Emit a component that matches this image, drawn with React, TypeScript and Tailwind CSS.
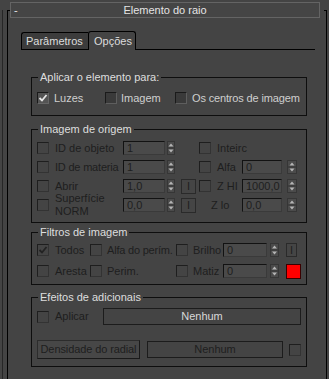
import React from "react";

const Check = ({ checked, dim }: { checked?: boolean; dim?: boolean }) => (
  <span
    className={
      dim
        ? "w-[12px] h-[12px] shrink-0 border border-t-[#1e1e1e] border-l-[#1e1e1e] border-b-[#333333] border-r-[#333333] bg-[#444444] flex items-center justify-center"
        : checked
        ? "w-[12px] h-[12px] shrink-0 border border-t-[#1a1a1a] border-l-[#1a1a1a] border-b-[#666666] border-r-[#666666] bg-[#545454] flex items-center justify-center"
        : "w-[12px] h-[12px] shrink-0 border border-t-[#1a1a1a] border-l-[#1a1a1a] border-b-[#5e5e5e] border-r-[#5e5e5e] bg-[#3a3a3a] flex items-center justify-center"
    }
  >
    {checked && (
      <svg width="10" height="10" viewBox="0 0 10 10">
        <polyline
          points="1.5,5 4,7.5 8.5,2"
          fill="none"
          stroke={dim ? "#222222" : "#e6e6e6"}
          strokeWidth="1.8"
        />
      </svg>
    )}
  </span>
);

const Spin = ({ w = 8, h = 14 }: { w?: number; h?: number }) => {
  const c = w / 2;
  return (
    <svg width={w} height={h} viewBox={`0 0 ${w} ${h}`} className="shrink-0 block">
      <rect x="0.5" y="0.5" width={w - 1} height={h - 1} fill="#4b4b4b" stroke="#363636" />
      <line x1="1" x2={w - 1} y1={h / 2} y2={h / 2} stroke="#333333" />
      <polygon points={`${c},2.5 ${c + 2.5},5.5 ${c - 2.5},5.5`} fill="#b5b5b5" />
      <polygon points={`${c},${h - 2.5} ${c + 2.5},${h - 5.5} ${c - 2.5},${h - 5.5}`} fill="#b5b5b5" />
    </svg>
  );
};

const Field = ({ v, cls }: { v: string; cls: string }) => (
  <span
    className={`${cls} h-[14px] shrink-0 border border-t-[#121212] border-l-[#121212] border-b-[#3a3a3a] border-r-[#3a3a3a] bg-[#4a4a4a] text-[#1e1e1e] pl-[3px] leading-[12px] overflow-hidden whitespace-nowrap`}
  >
    {v}
  </span>
);

const IBtn = ({ cls }: { cls: string }) => (
  <span
    className={`${cls} shrink-0 border border-[#2a2a2a] bg-[#454545] text-[#1e1e1e] flex items-center justify-center leading-none`}
  >
    I
  </span>
);

const Group = ({ title, children, cls }: { title: string; children: React.ReactNode; cls: string }) => (
  <fieldset className={`${cls} border border-[#0e0e0e] w-[276px] px-[5px] m-0`}>
    <legend className="ml-[1px] px-[2px] text-[#dedede] leading-[13px]">{title}</legend>
    {children}
  </fieldset>
);

const dimText = "text-[#1e1e1e]";

export default function App() {
  return (
    <div
      className="w-[329px] h-[379px] bg-[#444444] overflow-hidden pl-[2px] text-[11px] leading-[13px]"
      style={{ fontFamily: '"Liberation Sans", Arial, sans-serif' }}
    >
      <div className="h-full border-l border-[#262626] pl-[4px]">
        <div className="mt-[10px] w-[320px] h-[380px] border-l border-r border-t border-black">
          {/* header */}
          <div className="-mt-[9px] ml-[2px] w-[314px] h-[16px] bg-[#444444]">
            <div className="w-[310px] h-[16px] border border-[#646464] bg-[#454545] flex items-center text-[#e4e4e4]">
              <span className="w-[20px] pl-[3px]">-</span>
              <span className="flex-1 text-center">Elemento do raio</span>
              <span className="w-[20px]" />
            </div>
          </div>

          {/* tabs */}
          <div className="mt-[13px] ml-[13px] w-[294px] h-[19px] flex items-end">
            <div className="w-[67px] h-[18px] border-l border-t border-b border-black rounded-tl-[3px] bg-[#3c3c3c] text-[#dcdcdc] pl-[4px] flex items-center">
              Parâmetros
            </div>
            <div className="w-[48px] h-[19px] border-l border-t border-r border-black rounded-t-[3px] bg-[#444444] text-[#dcdcdc] pl-[5px] flex items-center">
              Opções
            </div>
            <div className="flex-1 h-full border-b border-black" />
          </div>

          <div className="ml-[23px] flex flex-col">
            {/* group 1 */}
            <Group title="Aplicar o elemento para:" cls="mt-[21px] pb-[10px]">
              <div className="mt-[7px] h-[14px] flex items-center text-[#cfcfcf] whitespace-nowrap">
                <div className="w-[68px] shrink-0 flex items-center gap-[5px]">
                  <Check checked />
                  <span>Luzes</span>
                </div>
                <div className="w-[70px] shrink-0 flex items-center gap-[4px]">
                  <Check />
                  <span>Imagem</span>
                </div>
                <div className="shrink-0 flex items-center gap-[5px] tracking-[-0.15px]">
                  <Check />
                  <span>Os centros de imagem</span>
                </div>
              </div>
            </Group>

            {/* group 2 */}
            <Group title="Imagem de origem" cls="mt-[7px] pb-[9px]">
              <div className={`mt-[4px] flex flex-col gap-[3px] ${dimText}`}>
                <div className="h-[16px] flex items-center">
                  <div className="w-[86px] shrink-0 flex items-center gap-[6px]">
                    <Check dim />
                    <span className="whitespace-nowrap">ID de objeto</span>
                  </div>
                  <Field v="1" cls="w-[42px]" />
                  <span className="ml-[2px]"><Spin /></span>
                  <span className="w-[24px] shrink-0" />
                  <div className="flex items-center gap-[6px]">
                    <Check dim />
                    <span>Inteirc</span>
                  </div>
                </div>
                <div className="h-[16px] flex items-center">
                  <div className="w-[86px] shrink-0 flex items-center gap-[6px]">
                    <Check dim />
                    <span className="whitespace-nowrap tracking-[-0.2px]">ID de materia</span>
                  </div>
                  <Field v="1" cls="w-[42px]" />
                  <span className="ml-[2px]"><Spin /></span>
                  <span className="w-[24px] shrink-0" />
                  <div className="w-[43px] shrink-0 flex items-center gap-[6px]">
                    <Check dim />
                    <span>Alfa</span>
                  </div>
                  <Field v="0" cls="w-[40px]" />
                  <span className="ml-[5px]"><Spin w={10} /></span>
                </div>
                <div className="h-[16px] flex items-center">
                  <div className="w-[86px] shrink-0 flex items-center gap-[6px]">
                    <Check dim />
                    <span>Abrir</span>
                  </div>
                  <Field v="1,0" cls="w-[42px]" />
                  <span className="ml-[2px]"><Spin /></span>
                  <span className="ml-[6px]"><IBtn cls="w-[15px] h-[15px]" /></span>
                  <span className="w-[3px] shrink-0" />
                  <div className="w-[43px] shrink-0 flex items-center gap-[6px]">
                    <Check dim />
                    <span className="whitespace-nowrap">Z HI</span>
                  </div>
                  <Field v="1000,0" cls="w-[40px]" />
                  <span className="ml-[5px]"><Spin w={10} /></span>
                </div>
                <div className="h-[16px] flex items-center">
                  <div className="w-[86px] shrink-0 flex items-center gap-[6px]">
                    <Check dim />
                    <span className="leading-[13px]">
                      Superfície
                      <br />
                      NORM
                    </span>
                  </div>
                  <Field v="0,0" cls="w-[42px]" />
                  <span className="ml-[2px]"><Spin /></span>
                  <span className="ml-[6px]"><IBtn cls="w-[15px] h-[15px]" /></span>
                  <span className="w-[3px] shrink-0" />
                  <div className="w-[43px] shrink-0 pl-[12px] flex items-center">
                    <span className="whitespace-nowrap">Z lo</span>
                  </div>
                  <Field v="0,0" cls="w-[40px]" />
                  <span className="ml-[5px]"><Spin w={10} /></span>
                </div>
              </div>
            </Group>

            {/* group 3 */}
            <Group title="Filtros de imagem" cls="mt-[3px] pb-[5px]">
              <div className={`mt-[3px] flex flex-col gap-[5px] ${dimText}`}>
                <div className="h-[16px] flex items-center">
                  <div className="w-[53px] shrink-0 flex items-center gap-[6px]">
                    <Check dim checked />
                    <span>Todos</span>
                  </div>
                  <div className="w-[86px] shrink-0 flex items-center gap-[5px]">
                    <Check dim />
                    <span className="whitespace-nowrap tracking-[-0.2px]">Alfa do perím.</span>
                  </div>
                  <div className="w-[47px] shrink-0 flex items-center gap-[5px]">
                    <Check dim />
                    <span>Brilho</span>
                  </div>
                  <Field v="0" cls="w-[44px]" />
                  <span className="ml-[3px]"><Spin w={9} /></span>
                  <span className="ml-[7px]"><IBtn cls="w-[11px] h-[14px]" /></span>
                </div>
                <div className="h-[16px] flex items-center">
                  <div className="w-[53px] shrink-0 flex items-center gap-[6px]">
                    <Check dim />
                    <span>Aresta</span>
                  </div>
                  <div className="w-[86px] shrink-0 flex items-center gap-[5px]">
                    <Check dim />
                    <span>Perim.</span>
                  </div>
                  <div className="w-[47px] shrink-0 flex items-center gap-[5px]">
                    <Check dim />
                    <span>Matiz</span>
                  </div>
                  <Field v="0" cls="w-[44px]" />
                  <span className="ml-[3px]"><Spin w={9} /></span>
                  <span className="ml-[7px] w-[15px] h-[15px] shrink-0 bg-[#ff0000] border border-[#3a0000]" />
                </div>
              </div>
            </Group>

            {/* group 4 */}
            <Group title="Efeitos de adicionais" cls="mt-[6px] pb-[7px]">
              <div className="mt-[4px] flex flex-col gap-[15px]">
                <div className="h-[17px] flex items-center">
                  <div className={`w-[66px] shrink-0 flex items-center gap-[6px] ${dimText}`}>
                    <Check dim />
                    <span>Aplicar</span>
                  </div>
                  <div className="w-[198px] h-[17px] shrink-0 border border-[#1c1c1c] bg-[#444444] text-[#d8d8d8] flex items-center justify-center">
                    Nenhum
                  </div>
                </div>
                <div className="h-[19px] flex items-center">
                  <div className={`w-[103px] h-[19px] shrink-0 border border-t-[#2c2c2c] border-l-[#2c2c2c] border-b-[#1a1a1a] border-r-[#1a1a1a] bg-[#474747] flex items-center justify-center whitespace-nowrap tracking-[-0.1px] ${dimText}`}>
                    Densidade do radial
                  </div>
                  <div className={`ml-[7px] w-[136px] h-[17px] shrink-0 border border-[#1c1c1c] bg-[#444444] flex items-center justify-center ${dimText}`}>
                    Nenhum
                  </div>
                  <span className="ml-[6px]"><Check dim /></span>
                </div>
              </div>
            </Group>
          </div>
        </div>
      </div>
    </div>
  );
}
